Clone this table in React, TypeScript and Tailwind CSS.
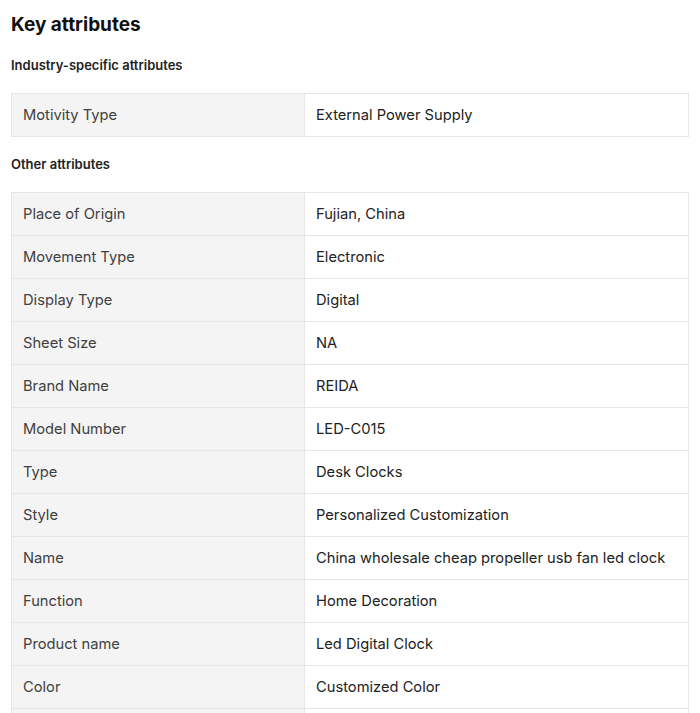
import React from "react";

const industry: [string, string][] = [["Motivity Type", "External Power Supply"]];
const other: [string, string][] = [
  ["Place of Origin", "Fujian, China"],
  ["Movement Type", "Electronic"],
  ["Display Type", "Digital"],
  ["Sheet Size", "NA"],
  ["Brand Name", "REIDA"],
  ["Model Number", "LED-C015"],
  ["Type", "Desk Clocks"],
  ["Style", "Personalized Customization"],
  ["Name", "China wholesale cheap propeller usb fan led clock"],
  ["Function", "Home Decoration"],
  ["Product name", "Led Digital Clock"],
  ["Color", "Customized Color"],
  ["", ""],
];

function Table({ rows }: { rows: [string, string][] }) {
  return (
    <div className="border-t border-l border-r border-[#e6e6e6]">
      {rows.map(([k, v], i) => (
        <div key={i} className="grid grid-cols-[293px_1fr] h-[43px] border-b border-[#e6e6e6]">
          <div className="bg-[#f4f4f4] border-r border-[#e6e6e6] flex items-center pl-[11px] text-[14.7px] text-[#404040]">
            {k}
          </div>
          <div className="flex items-center pl-[11px] text-[14.7px] text-[#222222]">{v}</div>
        </div>
      ))}
    </div>
  );
}

export default function App() {
  return (
    <div
      className="bg-white w-[700px] h-[713px] overflow-hidden pl-[11px] pr-[11px] pt-[13px]"
      style={{ fontFamily: "Inter, 'Noto Sans', sans-serif" }}
    >
      <h1 className="text-[19px] leading-[24px] font-bold text-[#111111]">Key attributes</h1>
      <h2 className="mt-[19px] text-[13px] leading-[18px] font-semibold text-[#222222]">
        Industry-specific attributes
      </h2>
      <div className="mt-[19px]">
        <Table rows={industry} />
      </div>
      <h2 className="mt-[18px] text-[13px] leading-[18px] font-semibold text-[#222222]">
        Other attributes
      </h2>
      <div className="mt-[19px]">
        <Table rows={other} />
      </div>
    </div>
  );
}
